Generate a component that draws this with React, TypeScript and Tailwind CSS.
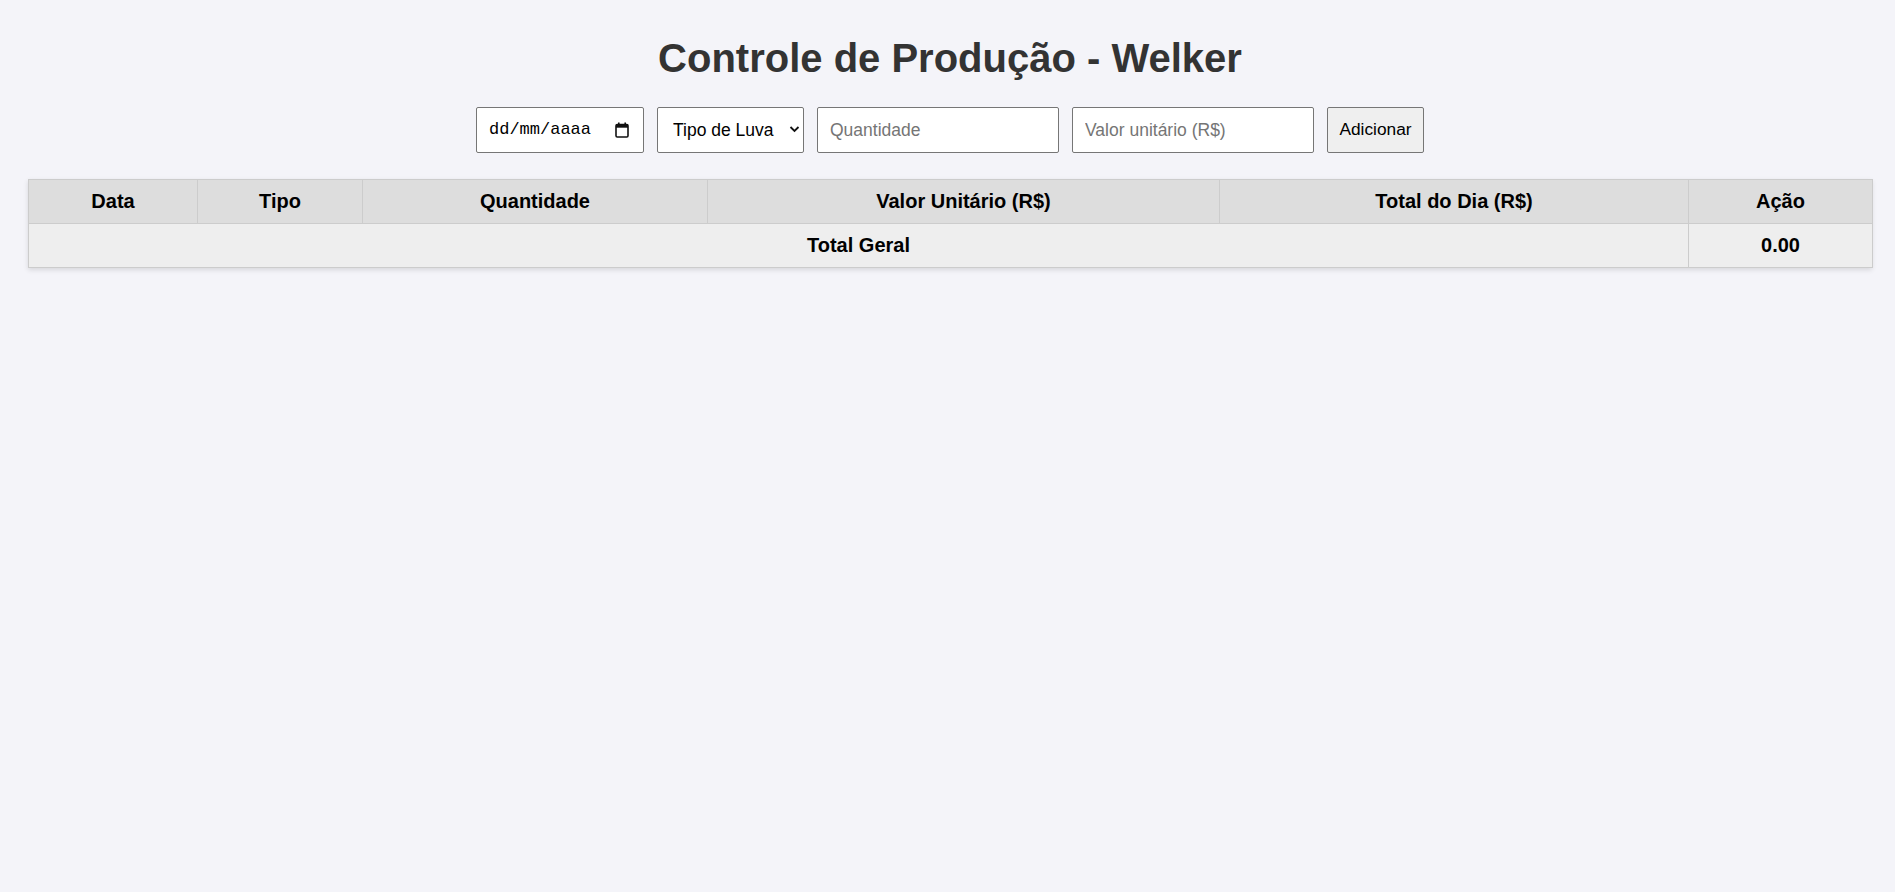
import React from "react";

export default function App() {
  return (
    <div className="min-h-[892px] w-full bg-[#f4f4f9] font-['Liberation_Sans',Arial,sans-serif] text-black">
      <h1 className="pl-[5px] pt-[35px] text-center text-[40px] font-bold leading-[46px] text-[#333]">
        Controle de Produção - Welker
      </h1>

      <div className="mt-[26px] flex justify-center gap-[13px] pl-[5px]">
        <div className="flex h-[46px] w-[168px] items-center justify-between rounded-[2px] border border-[#767676] bg-white pl-[12px] pr-[14px]">
          <span className="font-['Liberation_Mono',monospace] text-[17px] text-black">dd/mm/aaaa</span>
          <svg width="14" height="16" viewBox="0 0 14 16" fill="none">
            <rect x="1" y="2.5" width="12" height="12.5" rx="1.2" stroke="#111" strokeWidth="1.6" />
            <rect x="1" y="2.5" width="12" height="3.2" fill="#111" />
            <rect x="3" y="0.5" width="1.6" height="3" fill="#111" />
            <rect x="9.4" y="0.5" width="1.6" height="3" fill="#111" />
          </svg>
        </div>

        <div className="relative h-[46px] w-[147px]">
          <select
            defaultValue=""
            className="h-full w-full appearance-none rounded-[2px] border border-[#767676] bg-white pl-[15px] text-[17.5px] text-black outline-none"
          >
            <option value="" disabled>
              Tipo de Luva
            </option>
          </select>
          <svg
            className="pointer-events-none absolute right-[4px] top-[18px]"
            width="11"
            height="8"
            viewBox="0 0 11 8"
            fill="none"
          >
            <path d="M1.5 2 L5.5 6 L9.5 2" stroke="#111" strokeWidth="1.8" />
          </svg>
        </div>

        <input
          type="text"
          placeholder="Quantidade"
          className="h-[46px] w-[242px] rounded-[2px] border border-[#767676] bg-white px-[12px] text-[17.5px] text-black outline-none placeholder:text-[#757575]"
        />
        <input
          type="text"
          placeholder="Valor unitário (R$)"
          className="h-[46px] w-[242px] rounded-[2px] border border-[#767676] bg-white px-[12px] text-[17.5px] text-black outline-none placeholder:text-[#757575]"
        />
        <button className="h-[46px] w-[97px] rounded-[2px] border border-[#767676] bg-[#efefef] text-[17.3px] text-black">
          Adicionar
        </button>
      </div>

      <div className="ml-[28px] mt-[26px] w-[1844px] shadow-[0_2px_5px_rgba(0,0,0,0.12)]">
        <table className="w-[1844px] table-fixed border-collapse text-[20px] font-bold">
          <colgroup>
            <col className="w-[169px]" />
            <col className="w-[165px]" />
            <col className="w-[345px]" />
            <col className="w-[512px]" />
            <col className="w-[469px]" />
            <col className="w-[184px]" />
          </colgroup>
          <thead>
            <tr className="h-[44px] bg-[#ddd]">
              <th className="border border-[#ccc] p-0 pb-[2px] text-center">Data</th>
              <th className="border border-[#ccc] p-0 pb-[2px] text-center">Tipo</th>
              <th className="border border-[#ccc] p-0 pb-[2px] text-center">Quantidade</th>
              <th className="border border-[#ccc] p-0 pb-[2px] text-center">Valor Unitário (R$)</th>
              <th className="border border-[#ccc] p-0 pb-[2px] text-center">Total do Dia (R$)</th>
              <th className="border border-[#ccc] p-0 pb-[2px] text-center">Ação</th>
            </tr>
          </thead>
          <tbody>
            <tr className="h-[44px] bg-[#eee]">
              <td colSpan={5} className="border border-[#ccc] p-0 pb-[2px] text-center">
                Total Geral
              </td>
              <td className="border border-[#ccc] p-0 pb-[2px] text-center">0.00</td>
            </tr>
          </tbody>
        </table>
      </div>
    </div>
  );
}
